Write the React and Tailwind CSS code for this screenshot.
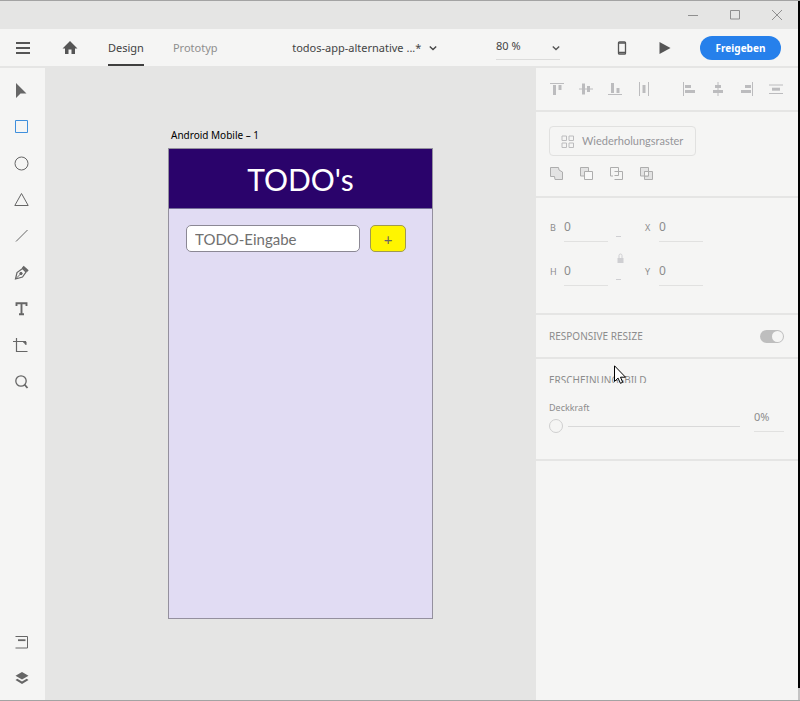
import { useState } from "react";

export default function App() {
  const [tool, setTool] = useState("Rechteck");

  return (
    <div className="h-screen flex bg-[#e5e5e4] border-y border-[#a3a3a3] font-['Noto_Sans',sans-serif] text-[11px] leading-4 text-[#555]">
      <div className="flex-1 min-w-0 flex flex-col">
        <TitleBar />
        <Header />

        <div className="flex-1 min-h-0 flex mt-0.5">
          <Toolbar tool={tool} onSelect={setTool} />
          <Canvas />
          <Inspector />
        </div>
      </div>

      {/* Window edge */}
      <div className="w-0.5 flex flex-col">
        <div className="flex-1 bg-black" />
        <div className="h-3 bg-[#c4c4c4]" />
      </div>
    </div>
  );
}

/* ================================
   Title bar
================================ */
function TitleBar() {
  return (
    <div className="h-7 shrink-0 flex items-center justify-end gap-8 pr-4 text-[#8f8f8f]">
      <button aria-label="Minimieren">
        <Icon size={10}>
          <path d="M0 5.5h10" />
        </Icon>
      </button>
      <button aria-label="Maximieren">
        <Icon size={10}>
          <path d="M.5 .5h9v8.5h-9z" />
        </Icon>
      </button>
      <button aria-label="Schließen">
        <Icon size={10}>
          <path d="M0 0l10 10M10 0L0 10" />
        </Icon>
      </button>
    </div>
  );
}

/* ================================
   Header
================================ */
function Header() {
  return (
    <header className="h-[37px] shrink-0 flex items-center bg-[#f5f5f4] pl-4 pr-[17px]">
      <button aria-label="Menü" className="mr-8">
        <Icon size={14}>
          <path d="M0 2h14M0 7h14M0 12h14" strokeWidth="2" />
        </Icon>
      </button>
      <button aria-label="Startseite" className="mr-[30px]">
        <Icon size={16}>
          <path
            d="M8 1L.5 8.5H3V14h3.5V9.500h3V14H13V8.500h2.500z"
            fill="currentColor"
            stroke="none"
          />
        </Icon>
      </button>

      <nav className="self-stretch flex gap-[29px]">
        <a
          href="#design"
          className="flex items-center border-b-2 border-[#3f3f3f] pt-0.5 text-[#3f3f3f]"
        >
          Design
        </a>
        <a
          href="#prototyp"
          className="flex items-center border-b-2 border-transparent pt-0.5 text-[#8e8e8e]"
        >
          Prototyp
        </a>
      </nav>

      <div className="flex-1 flex justify-center pl-4">
        <button className="flex items-center gap-2 whitespace-nowrap text-[#444]">
          todos-app-alternative ...*
          <Chevron />
        </button>
      </div>

      <div className="relative w-16 mr-[57px] flex items-center">
        <select
          aria-label="Zoom"
          defaultValue="80"
          className="w-full h-6 pb-0.5 appearance-none bg-transparent border-b border-[#dcdcdb] text-[#444]"
        >
          <option value="50">50 %</option>
          <option value="80">80 %</option>
          <option value="100">100 %</option>
        </select>
        <span className="absolute right-0 pointer-events-none">
          <Chevron />
        </span>
      </div>

      <button aria-label="Geräte-Vorschau" className="mr-8">
        <Icon width={10} size={14}>
          <rect x="1.500" y=".8" width="7" height="12.400" rx="1" strokeWidth="1.300" />
          <path d="M1 2h8M1 11.600h8" strokeWidth="1.600" />
        </Icon>
      </button>
      <button aria-label="Vorschau" className="mr-[29px]">
        <Icon width={12} size={14}>
          <path d="M.5 1v12L11.500 7z" fill="currentColor" stroke="none" />
        </Icon>
      </button>
      <button className="w-[81px] h-6 rounded-full bg-[#2680eb] text-white font-bold text-[10px]">
        Freigeben
      </button>
    </header>
  );
}

function Chevron() {
  return (
    <Icon size={8}>
      <path d="M.8 2.500L4 5.500l3.200-3" strokeWidth="1.400" />
    </Icon>
  );
}

/* ================================
   Toolbar
================================ */
const tools = [
  {
    name: "Auswählen",
    icon: <path d="M2 0v15l4.500-4.500H12.500z" fill="currentColor" stroke="none" />,
  },
  { name: "Rechteck", icon: <path d="M1.500 1.500h12v12h-12z" /> },
  { name: "Ellipse", icon: <circle cx="7.500" cy="7.500" r="6.500" /> },
  { name: "Polygon", icon: <path d="M7.500 1.500l6.700 12H.8z" /> },
  { name: "Linie", icon: <path d="M2 13.500L13.500 2" /> },
  {
    name: "Zeichenstift",
    icon: (
      <>
        <path d="M1.500 14L3 7.500 8.500 3.500l3.500 3.500L8.500 12z" strokeWidth="1.200" />
        <path d="M1.500 14l5-5" />
        <circle cx="7" cy="8.500" r="1.200" fill="currentColor" />
        <path d="M8.800 1.800l5 4.500" strokeWidth="2.600" />
      </>
    ),
  },
  {
    name: "Text",
    icon: (
      <path
        d="M2.500 5V2.200h10V5M7.500 2v11M5 13.200h5"
        strokeWidth="1.900"
      />
    ),
  },
  {
    name: "Zeichenfläche",
    icon: (
      <>
        <path d="M2.500 0v13.500h11M-1 3.500h12.500v3" strokeWidth="1.200" />
        <path d="M9.500 4h2.500v2.500z" fill="currentColor" />
      </>
    ),
  },
  {
    name: "Zoom",
    icon: (
      <>
        <circle cx="7" cy="7" r="5.200" strokeWidth="1.300" />
        <path d="M10.500 10.500l3 3.500" strokeWidth="1.800" />
      </>
    ),
  },
];

function Toolbar({ tool, onSelect }) {
  return (
    <aside className="w-[45px] shrink-0 flex flex-col justify-between bg-[#f5f5f4] pt-1 pb-1">
      <div className="h-[328px] grid grid-rows-9">
        {tools.map(({ name, icon }) => (
          <button
            key={name}
            aria-label={name}
            onClick={() => onSelect(name)}
            className={`flex items-center justify-center pr-0.5 ${
              tool === name ? "text-[#3f8fdc]" : "text-[#666]"
            }`}
          >
            <Icon size={15}>{icon}</Icon>
          </button>
        ))}
      </div>

      <div className="flex flex-col text-[#666]">
        <button aria-label="Elemente" className="h-9 flex items-center justify-center pr-0.5">
          <Icon size={13}>
            <path d="M.5 .5h12v11.500H.5" />
            <path d="M3 4.200h7.500" strokeWidth="1.800" />
          </Icon>
        </button>
        <button aria-label="Ebenen" className="h-9 flex items-center justify-center pr-0.5">
          <Icon size={14}>
            <path
              d="M7 1L.5 4.700 7 8.400l6.500-3.700zM2.300 7.700L.5 8.900 7 13l6.500-4.100-1.800-1.200L7 10.500z"
              fill="currentColor"
              stroke="none"
            />
          </Icon>
        </button>
      </div>
    </aside>
  );
}

/* ================================
   Canvas
================================ */
function Canvas() {
  return (
    <main className="flex-1 min-w-0 flex justify-center pl-5 pt-[59px]">
      <div className="w-[265px]">
        <div className="h-[21px] pl-[3px] text-[10px] text-black">
          Android Mobile – 1
        </div>

        {/* Artboard */}
        <div className="h-[471px] border border-[#94909e] bg-[#e1dcf3] font-['Lato',sans-serif]">
          <h1 className="h-[60px] flex items-center justify-center bg-[#2a036b] border-b border-[#77709a] text-white text-[30px]">
            TODO's
          </h1>
          <form
            className="flex gap-2.5 pl-[17px] pt-4"
            onSubmit={(e) => e.preventDefault()}
          >
            <input
              type="text"
              aria-label="TODO-Eingabe"
              placeholder="TODO-Eingabe"
              className="w-[174px] h-[27px] px-2 rounded-[5px] border border-[#8b8894] bg-white text-[15px] placeholder:text-[#707070] placeholder:opacity-100"
            />
            <button className="w-9 h-[27px] rounded-[5px] border border-[#a09a50] bg-[#fff500] text-[15px] text-[#666]">
              +
            </button>
          </form>
        </div>
      </div>
    </main>
  );
}

/* ================================
   Inspector
================================ */
const alignments = [
  {
    name: "Oben ausrichten",
    icon: (
      <>
        <path d="M0 1.500h14" />
        <path d="M4.500 3v10" strokeWidth="3" />
        <path d="M10 3v5" strokeWidth="3" />
      </>
    ),
  },
  {
    name: "Vertikal zentrieren",
    icon: (
      <>
        <path d="M0 7h14" />
        <path d="M4.500 1.500v11" strokeWidth="3" />
        <path d="M9.500 4v6" strokeWidth="3" />
      </>
    ),
  },
  {
    name: "Unten ausrichten",
    icon: (
      <>
        <path d="M0 12.500h14" />
        <path d="M4.500 1v10" strokeWidth="3" />
        <path d="M10 6v5" strokeWidth="3" />
      </>
    ),
  },
  {
    name: "Horizontal verteilen",
    icon: (
      <>
        <path d="M2.500 0v14M11.500 0v14" />
        <path d="M7 3v8" strokeWidth="3" />
      </>
    ),
  },
  {
    name: "Links ausrichten",
    icon: (
      <>
        <path d="M1.500 0v14" />
        <path d="M3 4.500h6" strokeWidth="3" />
        <path d="M3 9.500h10" strokeWidth="3" />
      </>
    ),
  },
  {
    name: "Horizontal zentrieren",
    icon: (
      <>
        <path d="M7 0v14" />
        <path d="M4 4.500h6" strokeWidth="3" />
        <path d="M2 9.500h10" strokeWidth="3" />
      </>
    ),
  },
  {
    name: "Rechts ausrichten",
    icon: (
      <>
        <path d="M12.500 0v14" />
        <path d="M5 4.500h6" strokeWidth="3" />
        <path d="M1 9.500h10" strokeWidth="3" />
      </>
    ),
  },
  {
    name: "Vertikal verteilen",
    icon: (
      <>
        <path d="M0 3h14M0 11.500h14" />
        <path d="M3 7.200h8" strokeWidth="3" />
      </>
    ),
  },
];

const booleans = [
  {
    name: "Hinzufügen",
    icon: (
      <path
        d="M.5 .5h8l.5 2.500 3.500 2v7.500H5L4.500 9.500H.5z"
        fill="#e3e3e3"
      />
    ),
  },
  {
    name: "Subtrahieren",
    icon: (
      <>
        <path d="M4.500 9H.5V.5h8v4" fill="#e3e3e3" />
        <path d="M4.500 4.500h8v8h-8z" fill="#f8f8f8" />
      </>
    ),
  },
  {
    name: "Überschneiden",
    icon: (
      <>
        <path d="M3 9H.5V.5h8v8H4.500" />
        <path d="M4.500 4.500h8v8h-8" />
      </>
    ),
  },
  {
    name: "Überlappung ausschließen",
    icon: (
      <>
        <path d="M.5 .5h8V9h-8zM4.500 4.500h8v8h-8z" fill="#e3e3e3" />
        <path d="M4.500 4.500h4V9h-4z" fill="#f5f5f4" />
      </>
    ),
  },
];

function Inspector() {
  return (
    <aside className="w-[262px] shrink-0 bg-[#f5f5f4] text-[#8c8c8c]">
      {/* Alignment */}
      <Section className="h-11 flex items-center justify-between pl-3.5 pr-[15px] text-[#bcbcbe]">
        <div className="flex gap-[15px]">
          {alignments.slice(0, 4).map((a) => (
            <IconButton key={a.name} {...a} size={14} />
          ))}
        </div>
        <div className="flex gap-[15px]">
          {alignments.slice(4).map((a) => (
            <IconButton key={a.name} {...a} size={14} />
          ))}
        </div>
      </Section>

      {/* Repeat grid and shape operations */}
      <Section className="h-[86px] pl-[13px] pt-3.5">
        <button className="w-[147px] h-[30px] flex items-center gap-2 pl-[11px] rounded border border-[#e1e1e0] whitespace-nowrap font-['Lato',sans-serif] text-[#96969a]">
          <Icon size={13}>
            <path
              d="M1 1h4.500v4.500H1zM8 1h4.500v4.500H8zM1 8h4.500v4.500H1zM8 8h4.500v4.500H8z"
              className="text-[#bcbcbe]"
              stroke="currentColor"
            />
          </Icon>
          Wiederholungsraster
        </button>
        <div className="flex gap-[17px] pl-px pt-[11px] text-[#adadad]">
          {booleans.map((b) => (
            <IconButton key={b.name} {...b} size={13} />
          ))}
        </div>
      </Section>

      {/* Size and position */}
      <Section className="h-[117px] flex pl-3.5 pt-5">
        <div className="flex flex-col gap-5">
          <Field label="B" />
          <Field label="H" />
        </div>
        <div className="w-[37px] h-16 pl-[7px] pt-1.5 text-[#cfcfd2]">
          <button aria-label="Seitenverhältnis sperren">
            <Icon width={12} size={56}>
              <path d="M1 12.500h5M1 55.500h5" />
              <path d="M4 34v-2.500q0-1.500 1.500-1.500T7 31.500V34" />
              <path d="M2.500 34h6v5h-6z" fill="currentColor" stroke="none" />
            </Icon>
          </button>
        </div>
        <div className="flex flex-col gap-5">
          <Field label="X" />
          <Field label="Y" />
        </div>
      </Section>

      {/* Responsive resize */}
      <Section className="h-11 flex items-center justify-between pl-[13px] pr-3.5 text-[10px]">
        <label htmlFor="responsive">RESPONSIVE RESIZE</label>
        <input
          id="responsive"
          type="checkbox"
          defaultChecked
          className="w-6 h-[13px] appearance-none rounded-full bg-[#bebebe] flex items-center justify-end px-px before:content-[''] before:w-[11px] before:h-[11px] before:rounded-full before:bg-[#f5f5f4]"
        />
      </Section>

      {/* Appearance */}
      <Section className="relative h-[102px] pl-[13px] pr-3.5 pt-[13px]">
        <h2 className="h-[11px] overflow-hidden text-[10px]">
          ERSCHEINUNGSBILD
        </h2>
        <div className="flex justify-between pt-[17px]">
          <div>
            <label htmlFor="opacity" className="block text-[9px]">
              Deckkraft
            </label>
            <input
              id="opacity"
              type="range"
              min="0"
              max="100"
              defaultValue="0"
              className="block w-[191px] h-5 appearance-none bg-transparent bg-[linear-gradient(#d9d9d9,#d9d9d9)] bg-[length:172px_1px] bg-right bg-no-repeat [&::-webkit-slider-thumb]:appearance-none [&::-webkit-slider-thumb]:w-3.5 [&::-webkit-slider-thumb]:h-3.5 [&::-webkit-slider-thumb]:rounded-full [&::-webkit-slider-thumb]:border [&::-webkit-slider-thumb]:border-[#cfcfcf]"
            />
          </div>
          <input
            type="text"
            aria-label="Deckkraft in Prozent"
            defaultValue="0%"
            className="w-[30px] h-6 mt-2 pb-1.5 bg-transparent border-b border-[#e1e1e0]"
          />
        </div>

        {/* Mouse pointer */}
        <svg
          className="absolute left-[78px] top-1.5"
          width="12"
          height="19"
          viewBox="0 0 12 19"
        >
          <path
            d="M.5 .8v15.700l3.600-3.400 2.300 5.200 2.300-1-2.200-5.100h5z"
            fill="white"
            stroke="black"
          />
        </svg>
      </Section>
    </aside>
  );
}

function Section({ className, children }) {
  return (
    <section className={`border-b-2 border-[#e5e5e4] ${className}`}>
      {children}
    </section>
  );
}

function Field({ label }) {
  return (
    <label className="flex items-center w-[58px] h-6">
      <span className="w-3.5 pb-1 text-[9px]">{label}</span>
      <input
        type="text"
        defaultValue="0"
        className="w-11 h-6 pb-1.5 bg-transparent border-b border-[#e1e1e0] text-xs"
      />
    </label>
  );
}

/* ================================
   Icons
================================ */
function IconButton({ name, icon, size }) {
  return (
    <button aria-label={name}>
      <Icon size={size}>{icon}</Icon>
    </button>
  );
}

function Icon({ size, width = size, children }) {
  return (
    <svg
      width={width}
      height={size}
      viewBox={`0 0 ${width} ${size}`}
      fill="none"
      stroke="currentColor"
      className="block overflow-visible"
    >
      {children}
    </svg>
  );
}
